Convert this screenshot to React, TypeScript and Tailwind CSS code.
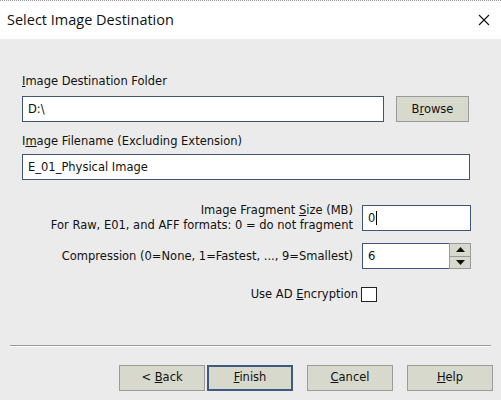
import type { ReactNode } from 'react';

const FONT = "font-['DejaVu_Sans',sans-serif]";

const Button = ({ children, primary = false }: { children: ReactNode; primary?: boolean }) => (
    <button
        type="button"
        className={`flex h-[26px] w-[86px] items-center justify-center bg-[#d8d9cd] text-[11.5px] text-[#111] ${
            primary ? 'border-2 border-[#3f5a7e]' : 'border border-[#9a9a9a]'
        }`}
    >
        <span>{children}</span>
    </button>
);

export default function App() {
    return (
        <div className={`flex h-[400px] w-[501px] flex-col overflow-hidden bg-[#ebebeb] text-[#111] ${FONT}`}>
            {/* Title bar */}
            <div className="flex h-[39px] shrink-0 items-center justify-between border-t border-dotted border-[#9a9a9a] bg-white pl-[7px] pr-[10px]">
                <span className="font-['Open_Sans',sans-serif] text-[14.5px] text-[#111]">Select Image Destination</span>
                <svg width="12" height="12" viewBox="0 0 12 12" className="mr-[1px]">
                    <path d="M1 1 L11 11 M11 1 L1 11" stroke="#111" strokeWidth="1.1" />
                </svg>
            </div>

            <div className="flex flex-col px-[22px] pt-[34px] text-[11.5px] leading-[16px]">
                <label>
                    <u>I</u>mage Destination Folder
                </label>
                <div className="mt-[7px] flex items-center">
                    <div className="flex h-[26px] w-[362px] items-center border border-[#3f5677] bg-white px-[5px]">
                        D:\
                    </div>
                    <div className="ml-[12px] -mt-[1px] flex h-[26px] w-[73px] items-center justify-center border border-[#9a9a9a] bg-[#d8d9cd]">
                        <span>
                            B<u>r</u>owse
                        </span>
                    </div>
                </div>

                <label className="mt-[11px]">
                    I<u>m</u>age Filename (Excluding Extension)
                </label>
                <div className="mt-[5px] flex h-[26px] w-[448px] items-center border border-[#3f5677] bg-white px-[5px]">
                    E_01_Physical Image
                </div>

                <div className="mt-[23px] grid grid-cols-[331px_109px] items-center gap-x-[9px] gap-y-[10px]">
                    <div className="text-right leading-[15px]">
                        <div>
                            Image Fragment <u>S</u>ize (MB)
                        </div>
                        <div>For Raw, E01, and AFF formats: 0 = do not fragment</div>
                    </div>
                    <div className="flex h-[26px] items-center border border-[#3f5677] bg-white px-[5px]">
                        <span>0</span>
                        <span className="ml-[1px] h-[14px] w-px bg-black" />
                    </div>

                    <div className="text-right">Compression (0=None, 1=Fastest, ..., 9=Smallest)</div>
                    <div className="flex h-[26px]">
                        <div className="flex flex-1 items-center border-y border-l border-[#3f5677] bg-white px-[5px]">6</div>
                        <div className="flex w-[22px] flex-col border border-[#9a9a9a] bg-[#d8d9cd]">
                            <div className="flex flex-1 items-center justify-center border-b border-[#9a9a9a]">
                                <svg width="9" height="5" viewBox="0 0 9 5">
                                    <path d="M4.5 0 L9 5 L0 5 Z" fill="#111" />
                                </svg>
                            </div>
                            <div className="flex flex-1 items-center justify-center">
                                <svg width="9" height="5" viewBox="0 0 9 5">
                                    <path d="M0 0 L9 0 L4.5 5 Z" fill="#111" />
                                </svg>
                            </div>
                        </div>
                    </div>
                </div>

                <div className="mt-[17px] flex w-[355px] items-center justify-end self-end pr-[102px]">
                    <span>
                        Use AD <u>E</u>ncryption
                    </span>
                    <span className="ml-[3px] h-[15px] w-[16px] border border-[#222] bg-white" />
                </div>
            </div>

            {/* Separator */}
            <div className="mx-[10px] mt-auto mb-[18px] h-[2px] border-t border-[#9a9a9a] border-b border-b-white" />

            <div className="mb-[9px] flex items-center pl-[119px]">
                <Button>
                    &lt; <u>B</u>ack
                </Button>
                <div className="ml-[2px]">
                    <Button primary>
                        <u>F</u>inish
                    </Button>
                </div>
                <div className="ml-[14px]">
                    <Button>
                        <u>C</u>ancel
                    </Button>
                </div>
                <div className="ml-[14px]">
                    <Button>
                        <u>H</u>elp
                    </Button>
                </div>
            </div>
        </div>
    );
}
